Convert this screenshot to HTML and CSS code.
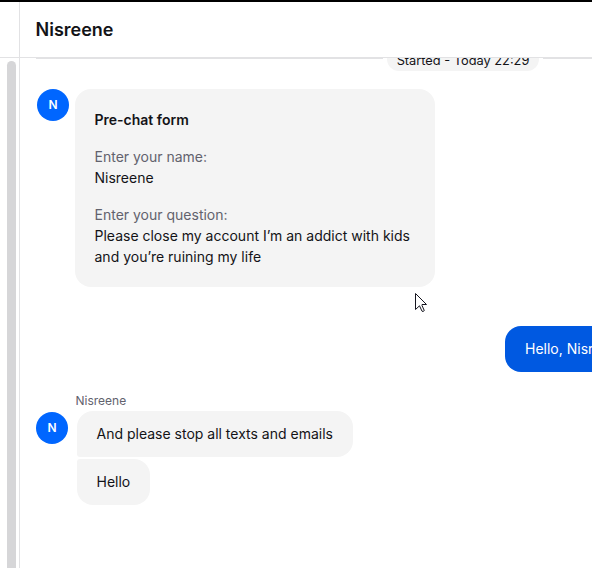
FILE: index.html
```html
<!DOCTYPE html>
<html lang="en">
<head>
    <meta charset="UTF-8">
    <meta name="viewport" content="width=device-width, initial-scale=1.0">
    <title>Chat</title>
    <link rel="stylesheet" href="styles.css">
</head>
<body>
    <div class="sidebar">
        <div class="sidebar-top"></div>
        <div class="sidebar-list">
            <div class="scrollbar"></div>
        </div>
    </div>

    <div class="chat">
        <div class="header">
            <h1>Nisreene</h1>
        </div>

        <div class="feed">
            <div class="divider">
                <span class="line line-left"></span>
                <span class="pill">Started - Today 22:29</span>
                <span class="line line-right"></span>
            </div>

            <div class="row row-form">
                <div class="avatar">N</div>
                <div class="form-card">
                    <h2>Pre-chat form</h2>
                    <dl>
                        <dt>Enter your name:</dt>
                        <dd>Nisreene</dd>
                        <dt>Enter your question:</dt>
                        <dd>Please close my account I’m an addict with kids and you’re ruining my life</dd>
                    </dl>
                </div>
            </div>

            <div class="row row-agent">
                <div class="bubble bubble-agent">Hello, Nisreene</div>
            </div>

            <div class="author">Nisreene</div>
            <div class="row row-visitor">
                <div class="avatar">N</div>
                <div class="messages">
                    <div class="bubble bubble-first">And please stop all texts and emails</div>
                    <div class="bubble bubble-last">Hello</div>
                </div>
            </div>
        </div>
    </div>

    <svg class="cursor" width="13" height="20" viewBox="0 0 13 20">
        <path d="M0.5 0.5V16.5L4.5 12.8L7 18.2Q8 19 9.3 17.6L7 12.5V11.5H11.5Z" fill="#fff" stroke="#15151f"/>
    </svg>
</body>
</html>
```

FILE: styles.css
```css
* {
    box-sizing: border-box;
}
body {
    margin: 0;
    height: 568px;
    display: flex;
    overflow: hidden;
    border-top: 2px solid #000;
    background: #fff;
    color: #131317;
    font-family: Inter, sans-serif;
    font-size: 14px;
    line-height: 21px;
}
.sidebar {
    flex: 0 0 20px;
    display: flex;
    flex-direction: column;
    border-right: 1px solid #e2e2e4;
}
.sidebar-top {
    flex: 0 0 56px;
    border-bottom: 1px solid #e2e2e4;
}
.sidebar-list {
    flex: 1;
    min-height: 0;
    overflow: hidden;
    padding: 3px 0 0 7px;
}
.scrollbar {
    width: 9px;
    height: 520px;
    border-radius: 5px;
    background: #d6d6d8;
}
.chat {
    flex: 1;
    min-width: 0;
    display: flex;
    flex-direction: column;
}
.header {
    flex: 0 0 56px;
    padding: 14px 15.5px 0;
    border-bottom: 1px solid #e2e2e4;
}
h1 {
    margin: 0;
    font-size: 18px;
    font-weight: 600;
    line-height: 28px;
}
.feed {
    flex: 1;
    overflow: hidden;
    padding-left: 16px;
}
.divider {
    display: flex;
    align-items: center;
    height: 24px;
    margin-top: -11px;
}
.line {
    height: 2px;
    margin-bottom: 2px;
    background: #e2e2e4;
}
.line-left {
    width: 347px;
}
.line-right {
    flex: 1;
}
.pill {
    width: 152px;
    height: 24px;
    margin: 0 4px;
    border-radius: 12px;
    background: #f4f4f4;
    font-size: 12.8px;
    line-height: 27px;
    text-align: center;
    white-space: nowrap;
}
.row {
    display: flex;
}
.row-form {
    margin-top: 18px;
    padding-left: 1px;
    gap: 6px;
}
.avatar {
    flex: none;
    width: 32px;
    height: 32px;
    border-radius: 50%;
    background: #0066ff;
    color: #fff;
    font-size: 12px;
    font-weight: 600;
    line-height: 32px;
    text-align: center;
}
.form-card {
    width: 360px;
    height: 198px;
    padding: 20px 19.5px;
    border-radius: 16px;
    background: #f4f4f4;
}
h2 {
    margin: 0;
    font-size: 14px;
    font-weight: 600;
    line-height: 21px;
}
dl {
    margin: 0;
}
dt {
    margin-top: 16px;
    color: #62626d;
}
dd {
    margin: 0;
}
.row-agent {
    margin-top: 39px;
    padding-left: 469px;
}
.bubble {
    height: 46px;
    padding: 0 19.5px;
    border-radius: 16px;
    background: #f4f4f4;
    line-height: 46px;
    white-space: nowrap;
}
.bubble-agent {
    padding: 0 20px;
    background: #0059e1;
    color: #fff;
}
.author {
    margin: 20px 0 0 39.5px;
    color: #62626d;
    font-size: 12px;
    line-height: 18px;
}
.row-visitor {
    margin-top: 1px;
    gap: 9px;
}
.row-visitor .avatar {
    margin-top: 1px;
}
.messages {
    display: flex;
    flex-direction: column;
    align-items: flex-start;
    gap: 2px;
}
.bubble-first {
    padding-right: 20px;
    border-bottom-left-radius: 3px;
}
.bubble-last {
    border-top-left-radius: 3px;
}
.cursor {
    position: absolute;
    left: 415px;
    top: 293px;
}
```
